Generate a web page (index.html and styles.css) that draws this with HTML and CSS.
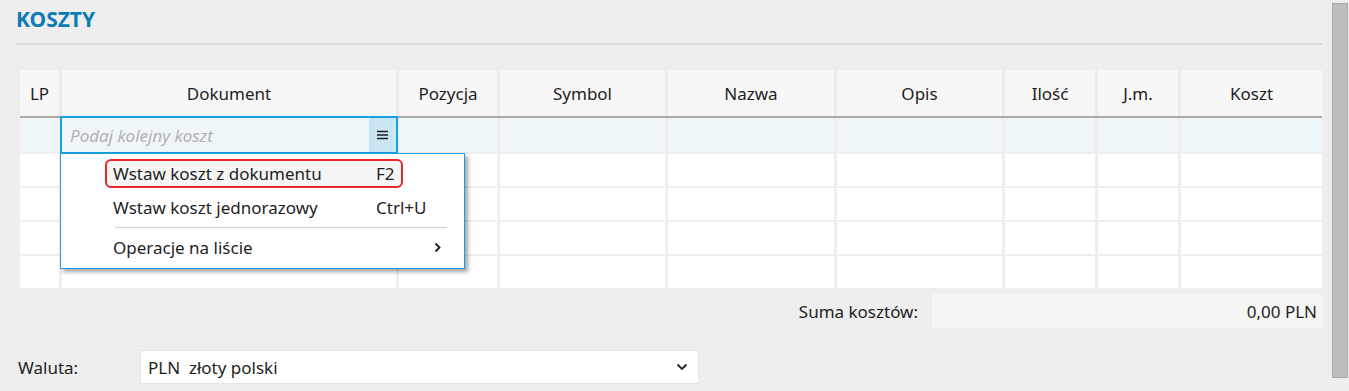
FILE: index.html
```html
<!DOCTYPE html>
<html lang="pl">
<head>
    <meta charset="UTF-8">
    <title>Koszty</title>
    <link rel="stylesheet" href="styles.css">
</head>
<body>
    <div class="page">
        <main class="content">
            <h2 class="title">KOSZTY</h2>
            <div class="rule"></div>

            <div class="table">
                <div class="row head">
                    <div class="cell">LP</div>
                    <div class="cell">Dokument</div>
                    <div class="cell">Pozycja</div>
                    <div class="cell">Symbol</div>
                    <div class="cell">Nazwa</div>
                    <div class="cell">Opis</div>
                    <div class="cell">Ilość</div>
                    <div class="cell">J.m.</div>
                    <div class="cell">Koszt</div>
                </div>

                <!-- wiersz edytowany -->
                <div class="row active">
                    <div class="cell"></div>
                    <div class="cell doc">
                        <div class="picker">
                            <span class="placeholder">Podaj kolejny koszt</span>
                            <span class="picker-btn">
                                <svg width="11" height="10" viewBox="0 0 11 10"><path d="M0 1.5 H11 M0 5 H11 M0 8.5 H11" stroke="#1e1e1e" stroke-width="1.4"/></svg>
                            </span>
                        </div>
                        <div class="menu">
                            <div class="menu-item marked">
                                <span>Wstaw koszt z dokumentu</span>
                                <span class="key">F2</span>
                            </div>
                            <div class="menu-item">
                                <span>Wstaw koszt jednorazowy</span>
                                <span class="key">Ctrl+U</span>
                            </div>
                            <div class="menu-sep"></div>
                            <div class="menu-item">
                                <span>Operacje na liście</span>
                                <svg class="arrow" width="7" height="11" viewBox="0 0 7 11"><path d="M1.5 1.5 L5.5 5.5 L1.5 9.5" fill="none" stroke="#1e1e1e" stroke-width="1.8"/></svg>
                            </div>
                        </div>
                    </div>
                    <div class="cell"></div>
                    <div class="cell"></div>
                    <div class="cell"></div>
                    <div class="cell"></div>
                    <div class="cell"></div>
                    <div class="cell"></div>
                    <div class="cell"></div>
                </div>

                <div class="row"><div class="cell"></div><div class="cell"></div><div class="cell"></div><div class="cell"></div><div class="cell"></div><div class="cell"></div><div class="cell"></div><div class="cell"></div><div class="cell"></div></div>
                <div class="row"><div class="cell"></div><div class="cell"></div><div class="cell"></div><div class="cell"></div><div class="cell"></div><div class="cell"></div><div class="cell"></div><div class="cell"></div><div class="cell"></div></div>
                <div class="row"><div class="cell"></div><div class="cell"></div><div class="cell"></div><div class="cell"></div><div class="cell"></div><div class="cell"></div><div class="cell"></div><div class="cell"></div><div class="cell"></div></div>
                <div class="row"><div class="cell"></div><div class="cell"></div><div class="cell"></div><div class="cell"></div><div class="cell"></div><div class="cell"></div><div class="cell"></div><div class="cell"></div><div class="cell"></div></div>
            </div>

            <div class="sum-row">
                <span class="sum-label">Suma kosztów:</span>
                <div class="sum-box">0,00 PLN</div>
            </div>

            <div class="currency-row">
                <span class="currency-label">Waluta:</span>
                <div class="select">
                    <span>PLN&nbsp; złoty polski</span>
                    <svg width="12" height="8" viewBox="0 0 12 8"><path d="M1.5 1.5 L6 6 L10.5 1.5" fill="none" stroke="#222" stroke-width="1.8"/></svg>
                </div>
            </div>
        </main>

        <div class="scrollbar">
            <div class="thumb"></div>
        </div>
    </div>
</body>
</html>
```

FILE: styles.css
```css
body {
    margin: 0;
    background: #eeeeee;
    font-family: 'Noto Sans', 'Open Sans', sans-serif;
    color: #1e1e1e;
    overflow: hidden;
}

.page {
    display: flex;
    height: 391px;
}

.content {
    width: 1306px;
    padding-left: 16px;
}

.title {
    margin: 0;
    padding-top: 6px;
    height: 37px;
    font-size: 21px;
    font-weight: 700;
    color: #0c7bb6;
    line-height: 26px;
}

.rule {
    height: 2px;
    background: #dadada;
}

/* tabela */
.table {
    margin: 25px 0 0 4px;
}

.row {
    display: grid;
    grid-template-columns: 39px 334px 98px 165px 166px 165px 90px 80px 1fr;
    column-gap: 3px;
    height: 32px;
    margin-top: 2px;
}

.row .cell {
    background: #fff;
    position: relative;
}

.row.head {
    height: 46px;
    margin-top: 0;
    background: #ebebeb;
    border-bottom: 2px solid #a9a9a9;
}

.row.head .cell {
    background: #f7f7f7;
    font-size: 17px;
    display: flex;
    align-items: center;
    justify-content: center;
}

.row.active {
    height: 34px;
    margin-top: 0;
}

.row.active .cell {
    background: #eef6f9;
}

/* pole wyboru dokumentu */
.picker {
    height: 100%;
    display: flex;
    align-items: center;
    outline: 2px solid #1b9fe0;
}

.placeholder {
    flex: 1;
    padding-left: 8px;
    font-size: 17px;
    font-style: italic;
    color: #b2b2b2;
}

.picker-btn {
    width: 27px;
    height: 100%;
    background: #c9e6f4;
    display: flex;
    align-items: center;
    justify-content: center;
}

/* menu kontekstowe */
.menu {
    position: absolute;
    top: 35px;
    left: -2px;
    width: 403px;
    padding: 5px 0 6px;
    background: #fff;
    border: 1px solid #1b9fe0;
    box-shadow: 3px 3px 4px rgba(0, 0, 0, 0.35);
    z-index: 2;
}

.menu-item {
    position: relative;
    display: grid;
    grid-template-columns: 263px 1fr;
    align-items: center;
    height: 29px;
    margin-bottom: 5px;
    padding-left: 52px;
    font-size: 17px;
}

.menu-item:last-child {
    margin-bottom: 0;
}

.menu-item.marked::before {
    content: "";
    position: absolute;
    left: 44px;
    top: 0;
    width: 294px;
    height: 25px;
    border: 2px solid #e5262b;
    border-radius: 6px;
    background: rgba(0, 0, 0, 0.04);
}

.menu-item span {
    position: relative;
}

.arrow {
    justify-self: end;
    margin-right: 23px;
}

.menu-sep {
    height: 1px;
    margin: 0 17px 5px 54px;
    background: #d4d4d4;
}

/* suma */
.sum-row {
    display: flex;
    justify-content: flex-end;
    align-items: center;
    gap: 14px;
    margin-top: 6px;
}

.sum-label {
    font-size: 17px;
}

.sum-box {
    width: 385px;
    height: 34px;
    padding-right: 5px;
    background: #f5f5f5;
    display: flex;
    align-items: center;
    justify-content: flex-end;
    font-size: 17px;
}

/* waluta */
.currency-row {
    display: flex;
    align-items: center;
    margin-top: 22px;
}

.currency-label {
    width: 122px;
    padding-left: 2px;
    font-size: 17px;
}

.select {
    width: 540px;
    height: 32px;
    padding: 0 10px 0 7px;
    background: #fff;
    border: 1px solid #e4e4e4;
    display: flex;
    align-items: center;
    justify-content: space-between;
    font-size: 17px;
}

/* pasek przewijania */
.scrollbar {
    width: 27px;
    padding: 3px 0 0 10px;
    box-sizing: border-box;
}

.thumb {
    width: 16px;
    height: 375px;
    box-sizing: border-box;
    background: #bdbdbd;
    border: 1px solid #a9a9a9;
}
```
